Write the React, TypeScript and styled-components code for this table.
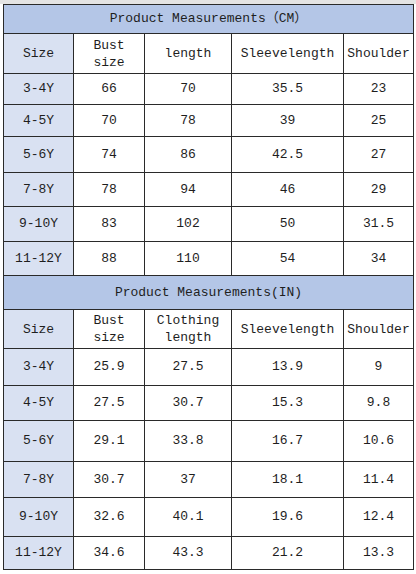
import React from "react";
import styled, { createGlobalStyle } from "styled-components";

const GlobalStyle = createGlobalStyle`
  html, body { margin: 0; padding: 0; background: #ffffff; }
  body { font-family: "Liberation Mono", "Noto Sans CJK SC", monospace; }
`;

const Page = styled.div`
  width: 416px;
  height: 574px;
  background: #ffffff;
  overflow: hidden;
  display: flex;
  flex-direction: column;
`;

const TopStrip = styled.div`
  height: 4px;
  background: #e4e4e4;
  flex: none;
`;

const Table = styled.table`
  margin-left: 3px;
  width: 411px;
  table-layout: fixed;
  border-collapse: collapse;
  font-family: "Liberation Mono", "Noto Sans CJK SC", monospace;
  font-size: 13px;
  color: #1e1e1e;
`;

const Row = styled.tr<{ $h: number }>`
  height: ${(p) => p.$h}px;
`;

const TitleCell = styled.th`
  background: #b4c6e7;
  border: 1px solid #2a2a2a;
  font-weight: normal;
  text-align: center;
  padding: 0;
  line-height: 16px;
`;

const HeadCell = styled.th<{ $accent?: boolean }>`
  background: ${(p) => (p.$accent ? "#d9e1f2" : "#ffffff")};
  border: 1px solid #2a2a2a;
  font-weight: normal;
  text-align: center;
  padding: 0;
  line-height: 17px;
`;

const Cell = styled.td<{ $accent?: boolean }>`
  background: ${(p) => (p.$accent ? "#d9e1f2" : "#ffffff")};
  border: 1px solid #2a2a2a;
  text-align: center;
  padding: 0;
  line-height: 16px;
`;

type Block = {
  title: string;
  titleH: number;
  headH: number;
  heads: string[][];
  rowHs: number[];
  rows: string[][];
};

const sizes = ["3-4Y", "4-5Y", "5-6Y", "7-8Y", "9-10Y", "11-12Y"];

const blocks: Block[] = [
  {
    title: "Product Measurements（CM）",
    titleH: 29,
    headH: 40,
    heads: [["Size"], ["Bust", "size"], ["length"], ["Sleevelength"], ["Shoulder"]],
    rowHs: [31, 32, 36, 34, 35, 34],
    rows: [
      ["66", "70", "35.5", "23"],
      ["70", "78", "39", "25"],
      ["74", "86", "42.5", "27"],
      ["78", "94", "46", "29"],
      ["83", "102", "50", "31.5"],
      ["88", "110", "54", "34"],
    ],
  },
  {
    title: "Product Measurements(IN)",
    titleH: 34,
    headH: 39,
    heads: [["Size"], ["Bust", "size"], ["Clothing", "length"], ["Sleevelength"], ["Shoulder"]],
    rowHs: [37, 35, 41, 36, 39, 33],
    rows: [
      ["25.9", "27.5", "13.9", "9"],
      ["27.5", "30.7", "15.3", "9.8"],
      ["29.1", "33.8", "16.7", "10.6"],
      ["30.7", "37", "18.1", "11.4"],
      ["32.6", "40.1", "19.6", "12.4"],
      ["34.6", "43.3", "21.2", "13.3"],
    ],
  },
];

const colWidths = [70, 71, 87, 112, 70];

export default function App() {
  return (
    <>
      <GlobalStyle />
      <Page>
        <TopStrip />
        <Table>
          <colgroup>
            {colWidths.map((w, i) => (
              <col key={i} style={{ width: w }} />
            ))}
          </colgroup>
          <tbody>
            {blocks.map((b, bi) => (
              <React.Fragment key={bi}>
                <Row $h={b.titleH}>
                  <TitleCell colSpan={5}>{b.title}</TitleCell>
                </Row>
                <Row $h={b.headH}>
                  {b.heads.map((lines, hi) => (
                    <HeadCell key={hi} $accent={hi === 0}>
                      {lines.map((l, li) => (
                        <React.Fragment key={li}>
                          {li > 0 && <br />}
                          {l}
                        </React.Fragment>
                      ))}
                    </HeadCell>
                  ))}
                </Row>
                {b.rows.map((r, ri) => (
                  <Row key={ri} $h={b.rowHs[ri]}>
                    <Cell $accent>{sizes[ri]}</Cell>
                    {r.map((v, vi) => (
                      <Cell key={vi}>{v}</Cell>
                    ))}
                  </Row>
                ))}
              </React.Fragment>
            ))}
          </tbody>
        </Table>
      </Page>
    </>
  );
}
